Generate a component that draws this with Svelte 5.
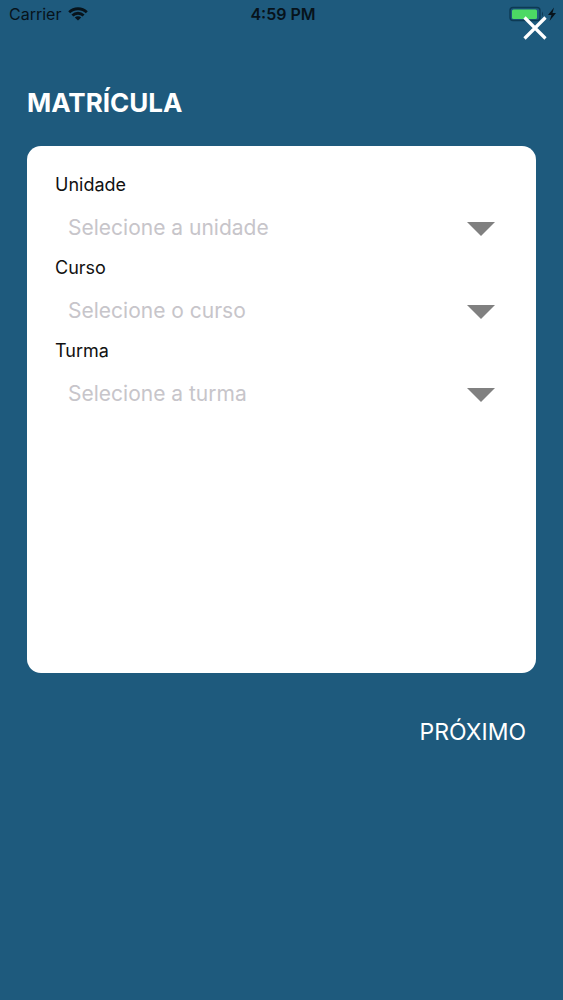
<script lang="ts">
  const fields = [
    { id: "unidade", label: "Unidade", placeholder: "Selecione a unidade" },
    { id: "curso", label: "Curso", placeholder: "Selecione o curso" },
    { id: "turma", label: "Turma", placeholder: "Selecione a turma" },
  ];

  let values = $state<Record<string, string>>({ unidade: "", curso: "", turma: "" });
</script>

<div class="screen">
  <header class="status-bar">
    <div class="carrier">
      <span>Carrier</span>
      <svg width="20" height="14" viewBox="0 0 20 14" aria-hidden="true">
        <g fill="none" stroke="#07131b" stroke-width="2.8">
          <path d="M1.2 5.2C6 .6 14 .6 18.8 5.2" />
          <path d="M4.4 8.5C7.6 5.5 12.4 5.5 15.6 8.5" />
        </g>
        <path d="M10 13.6 6.8 10.4C8.6 8.9 11.4 8.9 13.2 10.4Z" fill="#07131b" />
      </svg>
    </div>
    <time class="time">4:59 PM</time>
    <div class="battery">
      <svg width="48" height="16" viewBox="0 0 48 16" aria-hidden="true">
        <rect x="1" y="1.5" width="30" height="13" rx="3" fill="none" stroke="#0d3a54" stroke-width="1.4" />
        <rect x="3" y="3.5" width="25" height="9.5" rx="1.5" fill="#4cd964" />
        <path d="M33 5.5Q35 8 33 10.5Z" fill="#0d3a54" />
        <path d="M45 1.5 39 9H42.5L40.5 15 47 7H43.5Z" fill="#07131b" />
      </svg>
    </div>
  </header>

  <button class="close" type="button" aria-label="Fechar">
    <svg width="26" height="26" viewBox="0 0 26 26" aria-hidden="true">
      <path d="M2.5 2.5 23.5 23.5M23.5 2.5 2.5 23.5" stroke="#fff" stroke-width="3.2" />
    </svg>
  </button>

  <main>
    <h1>MATRÍCULA</h1>

    <form class="card">
      {#each fields as field (field.id)}
        <div class="field">
          <label for={field.id}>{field.label}</label>
          <div class="picker">
            <select id={field.id} bind:value={values[field.id]}>
              <option value="" disabled>{field.placeholder}</option>
            </select>
            <span class="arrow"></span>
          </div>
        </div>
      {/each}
    </form>

    <footer>
      <button class="next" type="button">PRÓXIMO</button>
    </footer>
  </main>
</div>

<style>
  :global(body) {
    margin: 0;
    background: #1e5a7d;
  }

  .screen {
    position: relative;
    display: flex;
    flex-direction: column;
    min-height: 100vh;
    background: #1e5a7d;
    font-family: Inter, Roboto, "Liberation Sans", sans-serif;
  }

  .status-bar {
    display: grid;
    grid-template-columns: 1fr auto 1fr;
    align-items: center;
    height: 28px;
    padding: 0 6px 0 9px;
    color: #07131b;
    font-size: 16px;
  }

  .carrier {
    display: flex;
    align-items: center;
    gap: 7px;
  }

  .time {
    font-weight: 600;
  }

  .battery {
    display: flex;
    justify-content: flex-end;
  }

  .battery svg,
  .carrier svg,
  .close svg {
    display: block;
  }

  button {
    padding: 0;
    border: 0;
    background: none;
    color: #fff;
    font-family: inherit;
    cursor: pointer;
  }

  /* sits over the status bar, close to the screen corner */
  .close {
    position: absolute;
    top: 15px;
    right: 15px;
  }

  main {
    display: flex;
    flex: 1;
    flex-direction: column;
    padding: 56px 27px 0;
  }

  h1 {
    margin: 0 0 24px;
    color: #fff;
    font-size: 26px;
    font-weight: 700;
    line-height: 38px;
  }

  .card {
    flex: 1;
    padding: 27px 28px;
    border-radius: 14px;
    background: #fff;
  }

  .field {
    margin-bottom: 6px;
  }

  label {
    display: block;
    margin-bottom: 7px;
    color: #111;
    font-size: 18px;
    line-height: 24px;
  }

  .picker {
    position: relative;
    display: flex;
  }

  select {
    flex: 1;
    height: 46px;
    padding: 0 48px 0 13px;
    border: 0;
    background: transparent;
    color: #c7c5ca;
    font-family: inherit;
    font-size: 21px;
    appearance: none;
  }

  .arrow {
    position: absolute;
    top: 18px;
    right: 13px;
    border-top: 14px solid #808080;
    border-right: 14px solid transparent;
    border-left: 14px solid transparent;
    pointer-events: none;
  }

  footer {
    display: flex;
    justify-content: flex-end;
    padding: 44px 10px 252px;
  }

  .next {
    font-size: 23px;
    line-height: 31px;
  }
</style>
